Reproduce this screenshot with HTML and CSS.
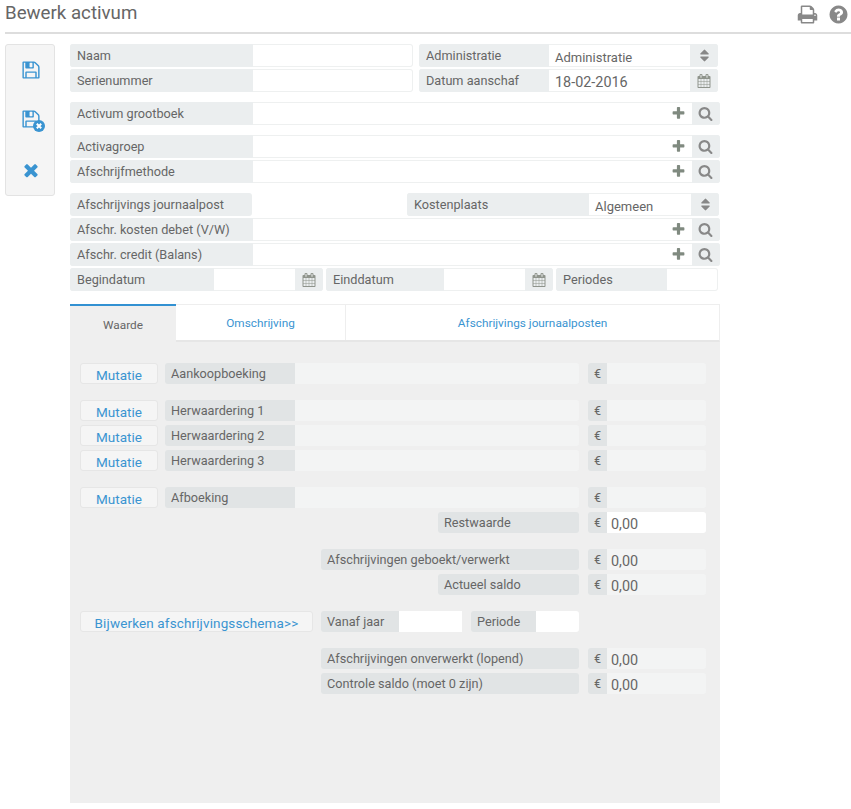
FILE: index.html
```html
<!DOCTYPE html>
<html lang="nl">
<head>
<meta charset="utf-8">
<title>Bewerk activum</title>
<link rel="stylesheet" href="styles.css">
</head>
<body>
<svg class="defs" width="0" height="0" aria-hidden="true">
  <symbol id="i-plus" viewBox="0 0 1792 1792"><path d="M1600 736v192q0 40-28 68t-68 28h-416v416q0 40-28 68t-68 28h-192q-40 0-68-28t-28-68v-416h-416q-40 0-68-28t-28-68v-192q0-40 28-68t68-28h416v-416q0-40 28-68t68-28h192q40 0 68 28t28 68v416h416q40 0 68 28t28 68z"/></symbol>
  <symbol id="i-search" viewBox="0 0 1792 1792"><path d="M1216 832q0-185-131.500-316.500t-316.500-131.500-316.500 131.500-131.500 316.500 131.500 316.500 316.500 131.500 316.500-131.500 131.500-316.500zm512 832q0 52-38 90t-90 38q-54 0-90-38l-343-342q-179 124-399 124-143 0-273.500-55.500t-225-150-150-225-55.500-273.500 55.500-273.500 150-225 225-150 273.500-55.500 273.500 55.500 225 150 150 225 55.500 273.500q0 220-124 399l343 343q37 37 37 90z"/></symbol>
  <symbol id="i-times" viewBox="0 0 1792 1792"><path d="M1490 1322q0 40-28 68l-136 136q-28 28-68 28t-68-28l-294-294-294 294q-28 28-68 28t-68-28l-136-136q-28-28-28-68t28-68l294-294-294-294q-28-28-28-68t28-68l136-136q28-28 68-28t68 28l294 294 294-294q28-28 68-28t68 28l136 136q28 28 28 68t-28 68l-294 294 294 294q28 28 28 68z"/></symbol>
  <symbol id="i-save" viewBox="0 0 1792 1792"><path d="M512 1536h768v-384h-768v384zm896 0h128v-896q0-14-10-38.500t-20-34.500l-281-281q-10-10-34-20t-39-10v416q0 40-28 68t-68 28h-576q-40 0-68-28t-28-68v-416h-128v1280h128v-416q0-40 28-68t68-28h832q40 0 68 28t28 68v416zm-384-928v-320q0-13-9.500-22.500t-22.500-9.500h-192q-13 0-22.500 9.500t-9.500 22.500v320q0 13 9.500 22.500t22.500 9.500h192q13 0 22.500-9.500t9.500-22.500zm640 32v928q0 40-28 68t-68 28h-1344q-40 0-68-28t-28-68v-1344q0-40 28-68t68-28h928q40 0 88 20t76 48l280 280q28 28 48 76t20 88z"/></symbol>
  <symbol id="i-cal" viewBox="0 0 1792 1792"><path d="M192 1664h288v-288h-288v288zm352 0h320v-288h-320v288zm-352-352h288v-320h-288v320zm352 0h320v-320h-320v320zm-352-384h288v-288h-288v288zm736 736h320v-288h-320v288zm-384-736h320v-288h-320v288zm768 736h288v-288h-288v288zm-384-352h320v-320h-320v320zm-352-864v-288q0-13-9.500-22.500t-22.500-9.500h-64q-13 0-22.500 9.500t-9.500 22.500v288q0 13 9.500 22.500t22.500 9.500h64q13 0 22.500-9.500t9.500-22.500zm736 864h288v-320h-288v320zm-384-384h320v-288h-320v288zm384 0h288v-288h-288v288zm32-480v-288q0-13-9.500-22.500t-22.500-9.500h-64q-13 0-22.500 9.500t-9.500 22.500v288q0 13 9.500 22.500t22.500 9.500h64q13 0 22.500-9.500t9.500-22.500zm384-64v1280q0 52-38 90t-90 38h-1408q-52 0-90-38t-38-90v-1280q0-52 38-90t90-38h128v-96q0-66 47-113t113-47h64q66 0 113 47t47 113v96h384v-96q0-66 47-113t113-47h64q66 0 113 47t47 113v96h128q52 0 90 38t38 90z"/></symbol>
  <symbol id="i-sort" viewBox="0 0 1792 1792"><path d="M1408 1088q0 26-19 45l-448 448q-19 19-45 19t-45-19l-448-448q-19-19-19-45t19-45 45-19h896q26 0 45 19t19 45zm0-384q0 26-19 45t-45 19h-896q-26 0-45-19t-19-45 19-45l448-448q19-19 45-19t45 19l448 448q19 19 19 45z"/></symbol>
  <symbol id="i-print" viewBox="0 0 1792 1792"><path d="M448 1536h896v-256h-896v256zm0-640h896v-384h-160q-40 0-68-28t-28-68v-160h-640v640zm1152 64q0-26-19-45t-45-19-45 19-19 45 19 45 45 19 45-19 19-45zm128 0v416q0 13-9.500 22.500t-22.500 9.500h-224v160q0 40-28 68t-68 28h-960q-40 0-68-28t-28-68v-160h-224q-13 0-22.500-9.500t-9.500-22.500v-416q0-79 56.500-135.500t135.500-56.500h64v-544q0-40 28-68t68-28h672q40 0 88 20t76 48l152 152q28 28 48 76t20 88v256h64q79 0 135.500 56.500t56.500 135.500z"/></symbol>
  <symbol id="i-help" viewBox="0 0 1792 1792"><path d="M1024 1376v-192q0-14-9-23t-23-9h-192q-14 0-23 9t-9 23v192q0 14 9 23t23 9h192q14 0 23-9t9-23zm256-672q0-88-55.500-163t-138.500-116-170-41q-243 0-371 213-15 24 8 42l132 100q7 6 19 6 16 0 25-12 53-68 86-92 34-24 86-24 48 0 85.500 26t37.500 59q0 38-20 61t-68 45q-63 28-115.500 86.500t-52.500 125.500v36q0 14 9 23t23 9h192q14 0 23-9t9-23q0-19 21.500-49.500t54.500-49.500q32-18 49-28.500t46-35 44.500-48 28-60.500 12.500-81zm384 192q0 209-103 385.500t-279.500 279.500-385.500 103-385.500-103-279.500-279.500-103-385.500 103-385.500 279.500-279.500 385.500-103 385.500 103 279.500 279.500 103 385.500z"/></symbol>
</svg>

<header class="page-head">
  <h1 class="page-title">Bewerk activum</h1>
  <div class="head-tools">
    <svg class="icon tool"><use href="#i-print"/></svg>
    <svg class="icon tool"><use href="#i-help"/></svg>
  </div>
</header>

<div class="content">
  <aside class="actions">
    <svg class="icon act"><use href="#i-save"/></svg>
    <span class="act-wrap">
      <svg class="icon act"><use href="#i-save"/></svg>
      <svg class="badge" viewBox="0 0 12 12"><circle cx="6" cy="6" r="6"/><path d="M3.800 3.800l4.400 4.400M8.200 3.800l-4.400 4.400"/></svg>
    </span>
    <svg class="icon act act-x"><use href="#i-times"/></svg>
  </aside>

  <main class="main">
    <form class="form">
      <div class="row">
        <div class="group w-naam"><label class="lab lab-183">Naam</label><input class="inp" type="text"></div>
        <div class="group w-adm"><label class="lab lab-130">Administratie</label><div class="val">Administratie</div><span class="add"><svg class="icon add-i"><use href="#i-sort"/></svg></span></div>
      </div>
      <div class="row sec">
        <div class="group w-naam"><label class="lab lab-183">Serienummer</label><input class="inp" type="text"></div>
        <div class="group w-adm"><label class="lab lab-130">Datum aanschaf</label><div class="val val-num">18-02-2016</div><span class="add"><svg class="icon add-i cal"><use href="#i-cal"/></svg></span></div>
      </div>

      <div class="row sec">
        <div class="group w-full"><label class="lab lab-183">Activum grootboek</label><div class="inp plus-field"><svg class="icon plus"><use href="#i-plus"/></svg></div><span class="add"><svg class="icon add-i srch"><use href="#i-search"/></svg></span></div>
      </div>

      <div class="row">
        <div class="group w-full"><label class="lab lab-183">Activagroep</label><div class="inp plus-field"><svg class="icon plus"><use href="#i-plus"/></svg></div><span class="add"><svg class="icon add-i srch"><use href="#i-search"/></svg></span></div>
      </div>
      <div class="row sec">
        <div class="group w-full"><label class="lab lab-183">Afschrijfmethode</label><div class="inp plus-field"><svg class="icon plus"><use href="#i-plus"/></svg></div><span class="add"><svg class="icon add-i srch"><use href="#i-search"/></svg></span></div>
      </div>

      <div class="row journal">
        <label class="lab lab-182 solo">Afschrijvings journaalpost</label>
        <div class="group w-kost"><label class="lab lab-182">Kostenplaats</label><div class="val">Algemeen</div><span class="add"><svg class="icon add-i"><use href="#i-sort"/></svg></span></div>
      </div>
      <div class="row">
        <div class="group w-full"><label class="lab lab-183">Afschr. kosten debet (V/W)</label><div class="inp plus-field"><svg class="icon plus"><use href="#i-plus"/></svg></div><span class="add"><svg class="icon add-i srch"><use href="#i-search"/></svg></span></div>
      </div>
      <div class="row">
        <div class="group w-full"><label class="lab lab-183">Afschr. credit (Balans)</label><div class="inp plus-field"><svg class="icon plus"><use href="#i-plus"/></svg></div><span class="add"><svg class="icon add-i srch"><use href="#i-search"/></svg></span></div>
      </div>
      <div class="row dates">
        <div class="group w-begin"><label class="lab lab-144">Begindatum</label><input class="inp" type="text"><span class="add"><svg class="icon add-i cal"><use href="#i-cal"/></svg></span></div>
        <div class="group w-eind"><label class="lab lab-118">Einddatum</label><input class="inp" type="text"><span class="add"><svg class="icon add-i cal"><use href="#i-cal"/></svg></span></div>
        <div class="group w-per"><label class="lab lab-111">Periodes</label><input class="inp" type="text"></div>
      </div>
    </form>

    <nav class="tabs">
      <a class="tab tab-active">Waarde</a>
      <a class="tab tab-2">Omschrijving</a>
      <a class="tab tab-3">Afschrijvings journaalposten</a>
    </nav>

    <section class="panel">
      <div class="p-row">
        <button class="btn btn-mut" type="button">Mutatie</button>
        <label class="p-lab pl-130">Aankoopboeking</label><div class="p-fill"></div>
        <span class="eur">€</span><div class="amt"></div>
      </div>
      <div class="p-row gap-top">
        <button class="btn btn-mut" type="button">Mutatie</button>
        <label class="p-lab pl-130">Herwaardering 1</label><div class="p-fill"></div>
        <span class="eur">€</span><div class="amt"></div>
      </div>
      <div class="p-row">
        <button class="btn btn-mut" type="button">Mutatie</button>
        <label class="p-lab pl-130">Herwaardering 2</label><div class="p-fill"></div>
        <span class="eur">€</span><div class="amt"></div>
      </div>
      <div class="p-row">
        <button class="btn btn-mut" type="button">Mutatie</button>
        <label class="p-lab pl-130">Herwaardering 3</label><div class="p-fill"></div>
        <span class="eur">€</span><div class="amt"></div>
      </div>
      <div class="p-row gap-top">
        <button class="btn btn-mut" type="button">Mutatie</button>
        <label class="p-lab pl-130">Afboeking</label><div class="p-fill"></div>
        <span class="eur">€</span><div class="amt"></div>
      </div>
      <div class="p-row end">
        <label class="p-lab pl-141">Restwaarde</label>
        <span class="eur">€</span><div class="amt amt-white">0,00</div>
      </div>
      <div class="p-row end gap-top">
        <label class="p-lab pl-258">Afschrijvingen geboekt/verwerkt</label>
        <span class="eur">€</span><div class="amt">0,00</div>
      </div>
      <div class="p-row end">
        <label class="p-lab pl-141">Actueel saldo</label>
        <span class="eur">€</span><div class="amt">0,00</div>
      </div>
      <div class="p-row gap-top">
        <button class="btn btn-wide" type="button">Bijwerken afschrijvingsschema&gt;&gt;</button>
        <label class="p-lab pl-78">Vanaf jaar</label><div class="white w-63"></div>
        <label class="p-lab pl-65 ml-9">Periode</label><div class="white w-43"></div>
      </div>
      <div class="p-row end gap-top">
        <label class="p-lab pl-258">Afschrijvingen onverwerkt (lopend)</label>
        <span class="eur">€</span><div class="amt">0,00</div>
      </div>
      <div class="p-row end">
        <label class="p-lab pl-258">Controle saldo (moet 0 zijn)</label>
        <span class="eur">€</span><div class="amt">0,00</div>
      </div>
    </section>
  </main>
</div>
</body>
</html>
```

FILE: styles.css
```css
* { box-sizing: border-box; }
html, body { margin: 0; padding: 0; }
body {
  background: #fff;
  color: #666;
  font-family: Roboto, "Noto Sans", sans-serif;
  font-size: 12.7px;
  width: 851px;
  height: 809px;
  overflow: hidden;
}
.defs { position: absolute; }
.icon { display: block; fill: currentColor; }

.page-head {
  height: 34px;
  margin-left: 5px;
  border-bottom: 2px solid #ddd;
  display: flex;
  justify-content: space-between;
}
.page-title {
  margin: 0;
  font-size: 18.7px;
  font-weight: 400;
  line-height: 27px;
  color: #666;
}
.head-tools { display: flex; gap: 10px; padding: 4px 2px 0 0; }
.tool { width: 21px; height: 21px; color: #888; }

.content { display: flex; align-items: flex-start; margin: 10px 0 0 5px; }
.actions {
  width: 50px;
  height: 152px;
  background: #f5f5f5;
  border: 1px solid #e3e3e3;
  border-radius: 3px;
  margin-right: 15px;
  padding: 15px 0 0 1px;
  display: flex;
  flex-direction: column;
  align-items: center;
  gap: 29px;
  color: #3a94d1;
}
.act { width: 20px; height: 20px; }
.act-x { margin-top: 2px; }
.act-wrap { position: relative; display: block; height: 20px; }
.badge { position: absolute; right: -4px; bottom: -3px; width: 12px; height: 12px; }
.badge circle { fill: #3a94d1; }
.badge path { stroke: #fff; stroke-width: 2; fill: none; }

.main { width: 650px; }
.row { display: flex; height: 23px; margin-bottom: 2px; gap: 6px; }
.row.sec { margin-bottom: 10px; }
.group { display: flex; height: 23px; border-radius: 3px; overflow: hidden; background: #fff; box-shadow: inset 0 0 0 1px #eef0f0; }
.w-naam { width: 343px; }
.w-adm { width: 299px; }
.w-full { width: 650px; }
.w-kost { width: 312px; margin-left: 155px; }
.w-begin { width: 253px; }
.w-eind { width: 227px; }
.w-per { width: 162px; }
.journal { gap: 0; }
.dates { gap: 3px; }

.lab {
  flex: none;
  height: 23px;
  background: #ebeeef;
  padding: 0 0 0 7px;
  line-height: 23px;
  color: #666;
  white-space: nowrap;
}
.solo { border-radius: 3px; }
.lab-183 { width: 183px; }
.lab-182 { width: 182px; }
.lab-144 { width: 144px; }
.lab-130 { width: 130px; }
.lab-118 { width: 118px; }
.lab-111 { width: 111px; }
.inp {
  flex: 1;
  min-width: 0;
  height: 23px;
  border: 0;
  background: transparent;
  outline: 0;
  padding: 0;
}
.plus-field { display: flex; justify-content: flex-end; align-items: center; padding-right: 6px; }
.plus { width: 15px; height: 15px; color: #808a80; margin-top: -1px; }
.val {
  flex: 1;
  margin: 1px 0;
  background: #fff;
  padding-left: 6px;
  font-size: 13px;
  line-height: 25px;
  color: #666;
}
.val-num { font-size: 14.4px; }
.add {
  flex: none;
  width: 28px;
  height: 23px;
  background: #ebeeef;
  display: flex;
  align-items: center;
  justify-content: center;
  color: #888;
}
.add-i { width: 15px; height: 15px; }
.srch { margin-left: -1px; }
.cal { color: #8f948c; width: 14px; height: 14px; }

.tabs {
  display: flex;
  height: 38px;
  margin-top: 13px;
  border: 1px solid #eee;
  border-left: 0;
  border-bottom: 2px solid #e6e6e6;
  background: #fff;
}
.tab {
  display: flex;
  align-items: center;
  justify-content: center;
  color: #3a94d1;
  font-size: 11.8px;
  padding-top: 1px;
}
.tab-active {
  width: 106px;
  margin: -1px 0 -2px 0;
  height: 39px;
  background: #efefef;
  border-top: 2px solid #3291d2;
  color: #666;
  padding-top: 0;
}
.tab-2 { width: 170px; border-right: 1px solid #eee; }
.tab-3 { flex: 1; }

.panel {
  height: 461px;
  background: #efefef;
  padding: 21px 14px 0 10px;
}
.p-row { display: flex; height: 21px; margin-bottom: 4px; align-items: stretch; }
.p-row.gap-top { margin-top: 16px; }
.p-row.end { justify-content: flex-end; }
.btn {
  flex: none;
  height: 21px;
  padding: 3px 0 0;
  background: #f5f5f5;
  border: 1px solid #e6e6e6;
  border-radius: 3px;
  color: #3a94d1;
  font: 13.5px Roboto, "Noto Sans", sans-serif;
  line-height: 16px;
}
.btn-mut { width: 78px; margin-right: 7px; }
.btn-wide { width: 233px; margin-right: 8px; letter-spacing: .13px; }
.p-lab {
  flex: none;
  background: #e1e4e5;
  padding-left: 6px;
  line-height: 21px;
  border-radius: 3px 0 0 3px;
  color: #666;
  white-space: nowrap;
}
.end .p-lab { margin-right: 9px; border-radius: 3px; }
.pl-130 { width: 130px; }
.pl-141 { width: 141px; }
.pl-258 { width: 258px; }
.pl-78 { width: 78px; }
.pl-65 { width: 65px; }
.ml-9 { margin-left: 9px; }
.p-fill { width: 284px; background: #f3f4f4; border-radius: 0 3px 3px 0; margin-right: 9px; }
.eur {
  flex: none;
  width: 19px;
  background: #e1e4e5;
  border-radius: 3px 0 0 3px;
  text-align: center;
  line-height: 21px;
}
.amt {
  width: 99px;
  background: #f3f4f4;
  border-radius: 0 3px 3px 0;
  padding-left: 4px;
  font-size: 14.4px;
  line-height: 25px;
}
.amt-white { background: #fff; }
.white { background: #fff; }
.w-63 { width: 63px; }
.w-43 { width: 43px; border-radius: 0 3px 3px 0; }
```
